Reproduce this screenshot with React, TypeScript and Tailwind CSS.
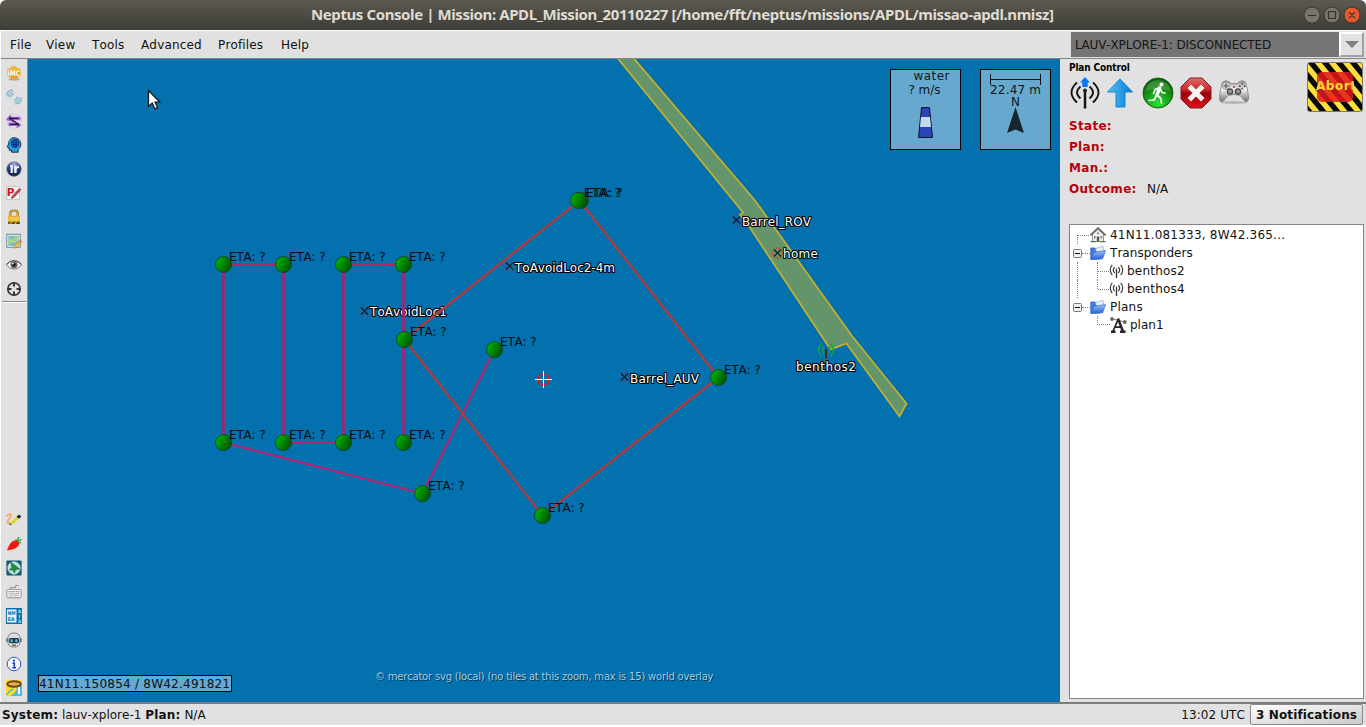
import React from "react";

const SANS = "font-['DejaVu_Sans',sans-serif] [font-kerning:none]";

const topIcons: React.ReactNode[] = [
  <g key="imc">
    <ellipse cx="8" cy="14.3" rx="5.5" ry="1.2" fill="#a9a9a9" />
    <path d="M8 .8 14.6 4.6V11L8 14.4 1.4 11V4.6Z" fill="#eda51c" />
    <path d="M8 .8 14.6 4.6 8 7 1.4 4.6Z" fill="#f3b53c" />
    <text x="1.6" y="10.5" fontSize="7.5" fontWeight="bold" fill="#fff" textLength="12.8" lengthAdjust="spacingAndGlyphs">iMC</text>
  </g>,
  <g key="link" fill="none" stroke="#6fb0cc" strokeWidth="1.1" strokeLinecap="round">
    <path d="M.8 7Q.5 1.200 6.500 1M2.800 7.500Q2.600 3.200 7 3M4.800 8Q4.600 5.300 7.500 5" />
    <path d="M15.200 9Q15.500 14.800 9.500 15M13.200 8.500Q13.400 12.800 9 13M11.200 8Q11.400 10.700 8.500 11" />
  </g>,
  <g key="swap">
    <circle cx="8" cy="8" r="7.3" fill="#e6def4" stroke="#c7bbdd" strokeWidth=".6" />
    <path d="M0 6 5 1.200V3.800H14.500V7.200H7L15.800 12 10.500 15.500V13H2.500V9.500H9L1 7.500Z" fill="#a36bd9" />
    <path d="M3.500 5.300H12.500M4 5.500 12 11M3.500 11.400H12.500" stroke="#26183c" strokeWidth="1.3" />
    <path d="M3 3.800 6 5.300 3 6.800ZM13 9.800V13L10.300 11.400Z" fill="#26183c" />
  </g>,
  <g key="head">
    <path d="M8 .8C12.2.8 14.8 3.6 14.8 7.2 14.8 10 13.5 11.3 12.2 12.5V15.2H5.6V13.2H3.2L3 10.6 1.2 10 2.6 7C2.6 3.4 4.8.8 8 .8Z" fill="#299be2" stroke="#12344e" />
    <circle cx="9" cy="6.5" r="4.2" fill="#071e68" />
    <path d="M4.8 6.5H13.2M5.5 4.5H12.5M5.5 8.5H12.5M9 2.3V10.7M7 2.8Q5.8 6.5 7 10.2M11 2.8Q12.2 6.5 11 10.2" fill="none" stroke="#147bd0" strokeWidth=".5" />
  </g>,
  <g key="ir">
    <circle cx="8" cy="8" r="7.4" fill="url(#navyBall)" stroke="#9ba3b6" strokeWidth=".6" />
    <path d="M4 4.200H6.800V12H4.600V6H4Z" fill="#eef1f8" />
    <path d="M8.2 4.800H10.300V6Q11.100 4.600 13 4.800V7Q10.600 6.500 10.600 9V12H8.200Z" fill="#eef1f8" />
  </g>,
  <g key="pen">
    <rect x=".6" y="1.500" width="13" height="13" fill="#f3f1f1" stroke="#b9b9b9" strokeWidth=".7" />
    <text x=".8" y="10.600" fontSize="10.500" fontWeight="bold" fill="#d5151d">P</text>
    <path d="M5.2 13.8 6.4 10.6 13.3 3 15.4 4.8 8.3 12.4Z" fill="#b64853" />
    <path d="M5.2 13.8 5.8 12 7 13Z" fill="#4c1319" />
  </g>,
  <g key="lock">
    <path d="M4.2 8V5Q4.2 1.7 8 1.7T11.8 5V8" fill="none" stroke="#9c6c15" strokeWidth="2.3" />
    <path d="M4.2 8V5Q4.2 1.7 8 1.7T11.8 5V8" fill="none" stroke="#f0c650" strokeWidth="1" />
    <rect x="2" y="6.8" width="12" height="8.2" rx=".8" fill="#e5ad2b" />
    <path d="M2.5 9H13.5M2.5 11H13.5" stroke="#f9d877" />
    <path d="M2.3 12.8H13.7V15H2.3Z" fill="#53421b" />
    <path d="M3.5 15 5.5 12.5H7L5 15ZM8 15 10 12.5H11.5L9.5 15Z" fill="#edbd35" />
  </g>,
  <g key="map">
    <rect x=".8" y="1.3" width="13.4" height="13" fill="#f4f8f6" stroke="#668aa1" />
    <rect x="2.3" y="2.8" width="10.4" height="10" fill="#78b8cf" />
    <path d="M2.3 7 5 4.8 6.3 7.5 8.5 3.5 12.7 3V7L9 10.3 5.5 9.7 2.3 12Z" fill="#b1d18a" />
    <path d="M7.8 15.3 8.3 12.8 13.7 7.5 15.6 9.2 10.2 14.6Z" fill="#f1bf39" stroke="#9f762a" strokeWidth=".5" />
    <path d="m13.1 8 1.2-1.1 1.7 1.6-1.1 1.3Z" fill="#ce6470" />
  </g>,
  <g key="eye">
    <path d="M.4 8Q3.8 3.8 8 3.8T15.6 8Q12 12.2 8 12.2T.4 8Z" fill="#f8f8f8" stroke="#616161" strokeWidth=".8" />
    <circle cx="8" cy="7.800" r="3.500" fill="#62606d" />
    <circle cx="8" cy="7.800" r="1.700" fill="#15151a" />
    <circle cx="6.800" cy="6.400" r="1" fill="#d9dde3" />
    <path d="M.5 7.3Q4 3.6 8 3.6T15.5 7.3" fill="none" stroke="#4a4a4a" strokeWidth="1" />
  </g>,
  <g key="target">
    <circle cx="8" cy="8" r="6.2" fill="none" stroke="#353535" strokeWidth="1.6" />
    <path d="M8 1.5V5.5M8 10.5V14.5M1.5 8H5.5M10.5 8H14.5" stroke="#353535" strokeWidth="2" />
  </g>,
];

const bottomIcons: React.ReactNode[] = [
  <g key="draw">
    <path d="M1.200 3.800Q4.500 1 4.800 2.800T2 8.500Q.8 11.500 3.500 11" fill="none" stroke="#f3ad69" strokeWidth="2" strokeLinecap="round" />
    <path d="M3.200 13.200 4.500 10.200 11.500 3.800 13.800 6 6.500 12.500Z" fill="#ddd52e" />
    <path d="M3.200 13.200 4.200 11.200 5.500 12.600ZM10.500 4.700 13 2.400 15.300 4.400 13 6.700Z" fill="#22211a" />
  </g>,
  <g key="carrot">
    <path d="M10.500 5.500 9.800 3.200M11 5.500 13 1M11.500 5.500 15.800 3.200M11.500 6.500 15 6.800" stroke="#27a535" strokeWidth="1.300" />
    <path d="M1 14.500Q3 7 8 4.500 13.500 3.800 13 9 10.500 13.500 1 14.500Z" fill="#f21a12" />
    <path d="m5 8 1.5 1.4M8.5 9.5l1.3 1M5.5 11.5 6.8 13" stroke="#a60705" strokeWidth=".7" />
  </g>,
  <g key="nav">
    <rect x=".4" y=".4" width="15.2" height="15.2" rx="1" fill="#165774" />
    <circle cx="8" cy="8" r="6.2" fill="#b7ddda" stroke="#eaf4f0" strokeWidth=".6" />
    <path d="M5 2.500 13.500 9 9.400 9.300 8.500 13 7 9.800 3.500 10 6 7.500Z" fill="#16933b" stroke="#0c642c" strokeWidth=".7" />
  </g>,
  <g key="keyb" fill="none" stroke="#8d8d8d">
    <path d="M4.500 5V3.500H9.500V1.500H13" strokeWidth=".9" />
    <rect x=".8" y="5.400" width="14.400" height="8" rx="1.500" fill="#f2f2f2" strokeWidth=".9" />
    <path d="M2.500 7.500H13.500M2.500 9.300H13.500M3.500 11.200H12.500" strokeDasharray="1.200 .7" strokeWidth="1" />
    <path d="M1.500 14H14.500" stroke="#adadad" />
  </g>,
  <g key="nmea">
    <rect x="0" y="0" width="16" height="16" fill="#0872ad" />
    <rect x="1" y="1.5" width="9.5" height="13" fill="#e9f4f9" />
    <g fontSize="5" fontWeight="bold" fill="#0872ad">
      <text x="1.7" y="7" textLength="8" lengthAdjust="spacingAndGlyphs">NM</text>
      <text x="1.7" y="13" textLength="7" lengthAdjust="spacingAndGlyphs">EA</text>
    </g>
    <g fontSize="4.6" fontWeight="bold" fill="#b6e3fc">
      <text x="11.7" y="5.2">A</text><text x="12.4" y="10">I</text><text x="11.900" y="15">S</text>
    </g>
  </g>,
  <g key="robot">
    <path d="M1.800 7Q1.800 1 8 1T14.200 7V9.500Q14.200 15 8 15T1.800 9.500Z" fill="#dedede" stroke="#777" strokeWidth=".9" />
    <path d="M1 6.2V10M15 6.2V10" stroke="#666" strokeWidth="1.4" />
    <rect x="2.800" y="6" width="10.400" height="5.200" rx="2" fill="#25323e" />
    <rect x="4.4" y="7.300" width="2.4" height="2.800" fill="#4bc0ed" />
    <rect x="9.2" y="7.300" width="2.4" height="2.800" fill="#4bc0ed" />
    <path d="M6 13.200H10" stroke="#555" strokeWidth="1.2" />
  </g>,
  <g key="info">
    <circle cx="8" cy="8" r="6.8" fill="#f7f8ff" stroke="#3152be" />
    <circle cx="8" cy="4.6" r="1.15" fill="#2145be" />
    <path d="M6.5 7.1H8.3V11.4M6.3 11.8H10" fill="none" stroke="#2145be" strokeWidth="1.6" />
  </g>,
  <g key="ring">
    <path d="M0 0H16V16H0Z" fill="#ffdf20" />
    <path d="M11 7 16 5V16H4Q10.500 13 11 7Z" fill="#51b9ea" />
    <ellipse cx="8" cy="4" rx="6.800" ry="2.700" fill="#d8b34d" stroke="#74460d" strokeWidth="1.900" />
    <path d="M13 7V14" stroke="#fff" strokeWidth="1.8" />
    <path d="M.5 15Q4 9.500 7.500 9.500" fill="none" stroke="#4fb6e4" strokeWidth="1.4" />
  </g>,
];

function ToolButton({ children }: { children: React.ReactNode }) {
  return (
    <div className="flex h-6 w-full shrink-0 items-center justify-center">
      <svg width="16" height="16" viewBox="0 0 16 16">{children}</svg>
    </div>
  );
}

function Toolbar() {
  return (
    <aside className="ml-px flex w-[27px] shrink-0 flex-col border-r border-[#8a8a8a] bg-[#e1e1e1] pt-[2px]">
      {topIcons.map((icon, i) => <ToolButton key={i}>{icon}</ToolButton>)}
      <div className="mx-px h-[2px] border-t border-[#858585] bg-white" />
      <div className="flex-1" />
      <div className="mb-[2px] flex flex-col">
        {bottomIcons.map((icon, i) => <ToolButton key={i}>{icon}</ToolButton>)}
      </div>
    </aside>
  );
}

const waypoints = [
  [223.5, 264.5], [283.5, 264.5], [343.5, 264.5], [403.5, 264.5],
  [223.5, 442.5], [283.5, 442.5], [343.5, 442.5], [403.5, 442.5],
  [404.5, 339.5], [494.5, 349.5], [422.5, 493.5], [542.5, 515.5],
  [718.5, 377.5], [580.5, 200.5], [578.5, 200.5],
];

const marks: [string, number, number, number, number][] = [
  ["ToAvoidLoc2-4m", 509.5, 266, 272, 100],
  ["ToAvoidLoc1", 364.5, 311, 316, 77],
  ["Barrel_AUV", 624.5, 377, 383, 69],
  ["Barrel_ROV", 736.5, 220, 226, 69],
  ["home", 777.5, 253, 258, 35],
];

function OutlinedText({ x, y, length, children }: { x: number; y: number; length: number; children: string }) {
  return (
    <text x={x} y={y} textLength={length} fill="#fff" stroke="#000" strokeWidth="2.2" strokeLinejoin="round" paintOrder="stroke">
      {children}
    </text>
  );
}

function MapView() {
  return (
    <svg className={`${SANS} block shrink-0 bg-[#0271ad] text-[12px]`} width="1032" height="643" viewBox="28 59 1032 643">
      <defs>
        <linearGradient id="node" x1="0" y1="0.1" x2="1" y2="0.6">
          <stop offset="0.1" stopColor="#00b400" />
          <stop offset="1" stopColor="#005400" />
        </linearGradient>
        <radialGradient id="navyBall" cx=".5" cy=".2" r=".8">
          <stop offset="0" stopColor="#a9b6da" />
          <stop offset=".55" stopColor="#223c7b" />
          <stop offset="1" stopColor="#101a38" />
        </radialGradient>
      </defs>
      <path
        d="M617.5 58 743 212.500 739.500 215 745.500 221 830.500 349.500 846.500 343.500 899.500 416.500 906.500 403.500 852 336 755 200.500 633.500 58Z"
        fill="#64946a" stroke="#c9b02c" strokeWidth="1.7"
      />
      {marks.map(([name, x, y, baseline, w]) => (
        <g key={name}>
          <circle cx={x} cy={y} r="5" fill="none" stroke={name === "home" ? "#c05035" : "#5c4c85"} strokeWidth="1" />
          <path d={`M${x - 3.5} ${y - 3.5}l7 7m0-7l-7 7`} stroke="#101820" strokeWidth="1.1" />
          <OutlinedText x={x + 5.5} y={baseline} length={w}>{name}</OutlinedText>
        </g>
      ))}
      <g fill="none">
        <path d="M223.500 442V264M283.500 264V442M343.500 442V264M403.500 264V442" stroke="#9a2a78" strokeWidth="2.8" />
        <path d="M223.500 264.500H283.500M283.500 442.500H343.500M343.500 264.500H403.500" stroke="#b52470" strokeWidth="2.400" />
        <path d="M223.500 442.500 422.500 493.500 494.500 349.500" stroke="#b52470" strokeWidth="2.300" />
        <path d="M404.500 339.500 579.500 200.500 718.500 377.500 542.500 515.500Z" stroke="#b13a3c" strokeWidth="2.300" />
      </g>
      {waypoints.map(([x, y], i) => (
        <g key={i}>
          <circle cx={x} cy={y} r="8" fill="url(#node)" stroke="#0c4630" strokeWidth="1" />
          <text x={x + 5.5} y={y - 3.5} textLength="36.500" fill="#040c12">ETA: ?</text>
        </g>
      ))}
      <circle cx="543.500" cy="379.500" r="5.500" fill="none" stroke="#f01020" strokeWidth="1.4" />
      <path d="M535 379.500H552M543.500 371V388" stroke="#fff" />
      <g>
        <g fill="none" stroke="#12a838" strokeWidth="1.4">
          <path d="M821 344Q816.500 350 821 356M824 346.500Q821 350 824 353.500M831 344Q835.500 350 831 356M828.500 346.500Q831.500 350 828.500 353.500" />
        </g>
        <path d="M826 349V362" stroke="#252e20" strokeWidth="2" />
        <path d="M823.500 362 826 358 828.500 362Z" fill="#7c6b1a" />
        <OutlinedText x={796} y={371} length={60}>benthos2</OutlinedText>
      </g>
      <g fill="#67a9ce" stroke="#000">
        <rect x="890.500" y="69.500" width="70" height="80" />
        <rect x="980.500" y="69.500" width="70" height="80" />
      </g>
      <g fill="#0b1720">
        <text x="913.500" y="80" textLength="36">water</text>
        <text x="908.500" y="94" textLength="32">? m/s</text>
        <text x="990" y="94" textLength="51">22.47 m</text>
        <text x="1011" y="106">N</text>
      </g>
      <path d="M921.500 107.500H929.500L932.500 137.500H918.500Z" fill="#2944b9" stroke="#101827" />
      <path d="M921 117H930L931 127H920Z" fill="#c0dbea" />
      <path d="M990.500 74V85M1040.500 74V85M990.500 79.500H1040.500" stroke="#0b1720" fill="none" />
      <path d="M1015.500 107 1024 133 1015.500 129.500 1007 133Z" fill="#18272f" />
      <rect x="38.500" y="675.500" width="193" height="16" fill="#67a9ce" stroke="#000" />
      <text x="39" y="688" textLength="191" fill="#061018">41N11.150854 / 8W42.491821</text>
      <g fontSize="10">
        <text x="376" y="681" textLength="338.500" fill="#06314d">© mercator svg (local) (no tiles at this zoom, max is 15) world overlay</text>
        <text x="375" y="680" textLength="338.500" fill="#a5cde2">© mercator svg (local) (no tiles at this zoom, max is 15) world overlay</text>
      </g>
      <path d="M148.500 90.500V106.500L152.300 103 154.800 108.800 157.500 107.600 155 102.200H159.800Z" fill="#fff" stroke="#101010" strokeWidth="1.2" />
    </svg>
  );
}

function AntennaIcon() {
  return (
    <svg width="15" height="16" viewBox="0 0 16 16" fill="none" stroke="#3b3b3b" strokeWidth="1.2" className="shrink-0">
      <path d="M3.500 1.500Q-.8 7 3.500 12.500M6 4Q3.200 7 6 10.200M10 4Q12.800 7 10 10.200M12.500 1.500Q16.800 7 12.500 12.500" />
      <path d="M8 5.500V15.500" strokeWidth="1.500" />
    </svg>
  );
}

function PlanButtons() {
  return (
    <div className="flex h-8 items-center">
      <svg width="32" height="32" viewBox="0 0 32 32" fill="none">
        <path d="M8 5.500Q-3 15.500 8 25.500M11.500 9.500Q4.500 15.500 11.500 21.500M24 5.500Q35 15.500 24 25.500M20.500 9.500Q27.500 15.500 20.500 21.500" stroke="#151515" strokeWidth="1.900" />
        <path d="M16 13V31.500" stroke="#151515" strokeWidth="2.500" />
        <circle cx="16" cy="13.500" r="2" fill="#222" />
        <path d="M16 0 21 5.500H18.700V10H13.300V5.500H11Z" fill="#0a75f5" />
      </svg>
      <svg width="28" height="32" viewBox="0 0 28 32" className="ml-[5px]">
        <path d="M14 2 26.500 15H19V30H10V15H1.500Z" fill="url(#arrow)" stroke="#1685d1" />
        <defs><linearGradient id="arrow"><stop stopColor="#50c7fc" /><stop offset="1" stopColor="#0874cd" /></linearGradient></defs>
      </svg>
      <svg width="32" height="32" viewBox="0 0 32 32" className="ml-2">
        <defs><radialGradient id="go" cx=".5" cy=".85" r=".75"><stop stopColor="#28e52c" /><stop offset=".6" stopColor="#169515" /><stop offset="1" stopColor="#07610c" /></radialGradient></defs>
        <circle cx="16" cy="16" r="15" fill="url(#go)" stroke="#135e16" />
        <path d="M3.500 14Q5 3.500 16 3 27 3.500 28.500 14 16 9 3.500 14Z" fill="#9cdb86" opacity=".3" />
        <circle cx="19.500" cy="7.500" r="2" fill="#fff" />
        <path d="m17.500 11-2.500 7" stroke="#fff" strokeWidth="3.500" strokeLinecap="round" />
        <path d="m15 18 3.500 3 1 5M14.500 18.500 12 23 7 23.500M17 11 13 12.500 11.500 16.500M18.500 12 20 15.500 23 16" fill="none" stroke="#fff" strokeWidth="1.700" strokeLinejoin="round" strokeLinecap="round" />
      </svg>
      <svg width="32" height="32" viewBox="0 0 32 32" className="ml-[6px]">
        <defs><linearGradient id="stop" x2="0" y2="1"><stop stopColor="#e16c6c" /><stop offset=".42" stopColor="#c62027" /><stop offset=".5" stopColor="#970209" /><stop offset="1" stopColor="#e0121c" /></linearGradient></defs>
        <path d="M10 1H22L31 10V22L22 31H10L1 22V10Z" fill="url(#stop)" stroke="#762026" />
        <path d="m11 11 10 10m0-10-10 10" stroke="#f6f3f3" strokeWidth="5" strokeLinecap="square" />
      </svg>
      <svg width="32" height="32" viewBox="0 0 32 32" className="ml-[6px]">
        <defs><linearGradient id="pad" x2="0" y2="1"><stop stopColor="#8f8f8f" /><stop offset=".4" stopColor="#f4f4f4" /><stop offset="1" stopColor="#707070" /></linearGradient></defs>
        <ellipse cx="16" cy="25.500" rx="13.500" ry="1.500" fill="#b5b5b5" />
        <path d="M4.500 5Q8 2.500 11.500 5L13 6.500H19L20.500 5Q24 2.500 27.500 5 29 9 30.500 19 31 26 27 24.500L22 18.500Q16 16.500 10 18.500L5 24.500Q1 26 1.500 19 3 9 4.500 5Z" fill="url(#pad)" stroke="#858585" strokeWidth=".8" />
        <circle cx="8" cy="9" r="3.600" fill="#dcdcdc" stroke="#888" strokeWidth=".6" />
        <path d="M8 6.500V11.500M5.500 9H10.500" stroke="#6e6e6e" strokeWidth="1.600" />
        <circle cx="12" cy="14.500" r="2.600" fill="#999" stroke="#444" strokeWidth="1.200" /><circle cx="20" cy="14.500" r="2.600" fill="#999" stroke="#444" strokeWidth="1.200" />
        <circle cx="24.200" cy="6.700" r="1" fill="#555" /><circle cx="24.200" cy="11.600" r="1" fill="#555" />
        <circle cx="21.800" cy="9.200" r="1" fill="#555" /><circle cx="26.600" cy="9.200" r="1" fill="#555" />
        <circle cx="16" cy="10" r="1.100" fill="#e02f35" />
      </svg>
    </div>
  );
}

function AbortButton() {
  return (
    <button className="mr-px block h-[50px] w-14 shrink-0">
      <svg width="56" height="50" viewBox="0 0 56 50">
        <defs>
          <pattern id="hazard" width="14" height="17" patternUnits="userSpaceOnUse">
            <path d="M0 0H14V17H0Z" fill="#ffe03a" />
            <path d="M0 0H7L14 8.500V17ZM0 8.500V17H7Z" fill="#080808" />
          </pattern>
          <clipPath id="abortEdge"><path d="M0 0H47V50H0Z" /></clipPath>
        </defs>
        <rect x=".5" y=".5" width="55" height="49" rx="2.500" fill="url(#hazard)" stroke="#777" />
        <rect x="10" y="10" width="36" height="30" rx="5" fill="#e2191c" fillOpacity=".85" />
        <text x="9" y="28" fontSize="12" fontWeight="bold" fill="#ffd633" textLength="40" clipPath="url(#abortEdge)">Abort</text>
      </svg>
    </button>
  );
}

function HomeIcon() {
  return (
    <svg width="16" height="16" viewBox="0 0 16 16" className="shrink-0">
      <path d="M2.500 7V14.500H13.500V7L8 2.500Z" fill="#f1f1ed" stroke="#777" strokeWidth=".8" />
      <path d="M.4 8.400 8 1 15.600 8.400" fill="none" stroke="#6a6a6a" strokeWidth="1.700" />
      <path d="M6.800 9.500H9.200V14.500H6.800Z" fill="#555" />
      <path d="M4 9H5.500V11.500H4ZM10.500 9H12V11.500H10.500ZM7 5.500H9V7H7Z" fill="#777" />
      <path d="M.5 14.700H6M10 14.700H15.500" stroke="#5c724b" strokeWidth="1.300" />
    </svg>
  );
}

function FolderIcon() {
  return (
    <svg width="16" height="16" viewBox="0 0 16 16" className="shrink-0">
      <path d="M.8 3H5L6.500 4.500H10V14H.8Z" fill="#437be0" stroke="#2d5ec0" strokeWidth=".8" />
      <path d="M5.500 3.500 13 1.300 14 8 7 9Z" fill="#eaf2ff" stroke="#86a9e6" strokeWidth=".7" />
      <path d="M3.800 7.300 15.600 5.600 12.600 13.800.8 14.600Z" fill="url(#folder)" stroke="#3366cb" strokeWidth=".7" />
      <defs><linearGradient id="folder" x2="0" y2="1"><stop stopColor="#9cc4fb" /><stop offset="1" stopColor="#1f5edb" /></linearGradient></defs>
    </svg>
  );
}

function PlanIcon() {
  return (
    <svg width="17" height="16" viewBox="0 0 17 16" className="shrink-0">
      <path d="M3 14.500 8 2.500M5 10.200H11.500" fill="none" stroke="#252525" strokeWidth="1.700" />
      <path d="M2 2.200 8 3 14.500 5.200" fill="none" stroke="#777" strokeWidth="1" />
      <path d="M8 1.500 13 14.500M1 14.700H5.500M10 14.700H15.500" fill="none" stroke="#252525" strokeWidth="2.500" />
      <circle cx="2" cy="2" r="1.900" fill="#666" /><circle cx="14.800" cy="5" r="1.900" fill="#666" />
    </svg>
  );
}

function Expander() {
  return (
    <svg width="9" height="9" viewBox="0 0 9 9" className="shrink-0">
      <rect x=".5" y=".5" width="8" height="8" rx="1" fill="#f1f1ed" stroke="#777" />
      <path d="M2 4.500H7" stroke="#111" />
    </svg>
  );
}

function Dots({ className }: { className: string }) {
  return <span className={`shrink-0 border-dotted border-[#808080] ${className}`} />;
}

function MissionTree() {
  return (
    <div className="mt-[24px] flex-1 border border-[#858585] bg-white pt-px text-[12px] [&>div]:h-[18px] [&>div]:items-center">
      <div className="flex">
        <Dots className="ml-[7px] mt-[9px] h-[9px] w-3 border-l border-t" />
        <span className="w-px" /><HomeIcon /><span className="ml-1 tracking-[0.22px]">41N11.081333, 8W42.365...</span>
      </div>
      <div className="flex">
        <span className="ml-[3px] flex"><Expander /></span><Dots className="w-2 border-t" /><FolderIcon /><span className="ml-1 tracking-[0.05px]">Transponders</span>
      </div>
      <div className="flex">
        <Dots className="ml-[7px] h-[18px] w-5 border-l" /><Dots className="h-[18px] border-l" /><Dots className="w-[11px] border-t" /><AntennaIcon /><span className="ml-[3px] tracking-[0.22px]">benthos2</span>
      </div>
      <div className="flex">
        <Dots className="ml-[7px] h-[18px] w-5 border-l" /><Dots className="mb-[9px] h-[9px] border-l" /><Dots className="w-[11px] border-t" /><AntennaIcon /><span className="ml-[3px] tracking-[0.22px]">benthos4</span>
      </div>
      <div className="flex">
        <span className="ml-[3px] flex"><Expander /></span><Dots className="w-2 border-t" /><FolderIcon /><span className="ml-1 tracking-[0.22px]">Plans</span>
      </div>
      <div className="flex">
        <Dots className="mb-[9px] ml-[27px] h-[9px] w-[13px] border-b border-l" /><PlanIcon /><span className="ml-[3px]">plan1</span>
      </div>
    </div>
  );
}

function SidePanel() {
  return (
    <aside className="flex min-w-0 flex-1 flex-col bg-[#e1e1e1] pb-[3px] pl-[9px] pr-[2px] pt-[3px]">
      <div className="flex h-[51px] justify-between">
        <div>
          <div className="h-[15px] whitespace-nowrap font-['DejaVu_Sans_Condensed','DejaVu_Sans',sans-serif] text-[10px] font-bold leading-[12px] tracking-[-0.15px] text-black">Plan Control</div>
          <PlanButtons />
        </div>
        <AbortButton />
      </div>
      <div className="mt-[3px] flex flex-col text-[12px] font-bold leading-[21px] tracking-[0.3px] text-[#b80008]">
        <div>State:</div>
        <div>Plan:</div>
        <div>Man.:</div>
        <div className="flex"><span className="w-[78px]">Outcome:</span><span className="font-normal tracking-normal text-[#111]">N/A</span></div>
      </div>
      <MissionTree />
    </aside>
  );
}

function TitleBar() {
  return (
    <header className="relative h-[30px] rounded-t-[6px] bg-linear-to-b from-[#5c5a50] to-[#3d3c37]">
      <svg width="1366" height="30" viewBox="0 0 1366 30" className="block overflow-visible font-['Noto_Sans',sans-serif] text-[15px] font-bold">
        <text x="311" y="20" textLength="743" fill="#dfdbd2">Neptus Console | Mission: APDL_Mission_20110227 [/home/fft/neptus/missions/APDL/missao-apdl.nmisz]</text>
      </svg>
      <svg className="absolute right-1 top-[5px]" width="60" height="20" viewBox="0 0 60 20" fill="none">
        <g stroke="#383731">
          <circle cx="10" cy="10" r="8" fill="#77756d" /><circle cx="30" cy="10" r="8" fill="#77756d" /><circle cx="50" cy="10" r="8" fill="#e9592c" />
        </g>
        <path d="M6 10.500H14M26.500 6.500H33.500V13.500H26.500ZM47 7.200 53 13.200M53 7.200 47 13.200" stroke="#34332e" strokeWidth="1.200" />
      </svg>
    </header>
  );
}

function MenuBar() {
  return (
    <div className="ml-px flex h-[29px] justify-between border-b border-t border-b-[#858585] border-t-white bg-[#e1e1e1]">
      <nav className="flex items-center pl-[9px] text-[12px] tracking-[0.15px]">
        <span className="w-9">File</span>
        <span className="w-[46px]">View</span>
        <span className="w-[49px]">Tools</span>
        <span className="w-[77px]">Advanced</span>
        <span className="w-[63px]">Profiles</span>
        <span>Help</span>
      </nav>
      <div className="mr-[2px] mt-px flex h-[25px] w-[293px] bg-[#747474] text-[12px]">
        <span className="flex flex-1 items-center whitespace-nowrap pl-1 tracking-[-0.14px] text-[#161616]">LAUV-XPLORE-1: DISCONNECTED</span>
        <span className="flex w-[25px] items-center justify-center border-2 border-b-[#a0a0a0] border-l-white border-r-[#a0a0a0] border-t-white bg-[#e1e1e1]">
          <svg width="14" height="7" viewBox="0 0 14 7"><path d="M0 0H14L7 7Z" fill="#808080" /></svg>
        </span>
      </div>
    </div>
  );
}

function StatusBar() {
  return (
    <footer className="flex h-[23px] items-center justify-between border-t-2 border-[#7c7c7c] bg-[#e1e1e1] pl-[2px] pr-[3px] text-[12px]">
      <div className="whitespace-pre"><b className="tracking-[0.2px]">System:</b> lauv-xplore-1 <b className="tracking-[0.2px]">Plan:</b> N/A</div>
      <div className="flex h-full items-center">
        <span className="mr-[5px] tracking-[0.1px]">13:02 UTC</span>
        <button className="h-[21px] w-[113px] whitespace-nowrap rounded-[2px] border border-[#888] bg-linear-to-br from-white to-[#c9c9c9] text-[12px] font-bold tracking-[0.15px]">3 Notifications</button>
      </div>
    </footer>
  );
}

export default function App() {
  return (
    <div className={`${SANS} flex h-[727px] w-[1366px] flex-col overflow-hidden bg-white text-[12px] text-[#111]`}>
      <TitleBar />
      <MenuBar />
      <main className="flex h-[643px] shrink-0">
        <Toolbar />
        <MapView />
        <SidePanel />
      </main>
      <StatusBar />
    </div>
  );
}
